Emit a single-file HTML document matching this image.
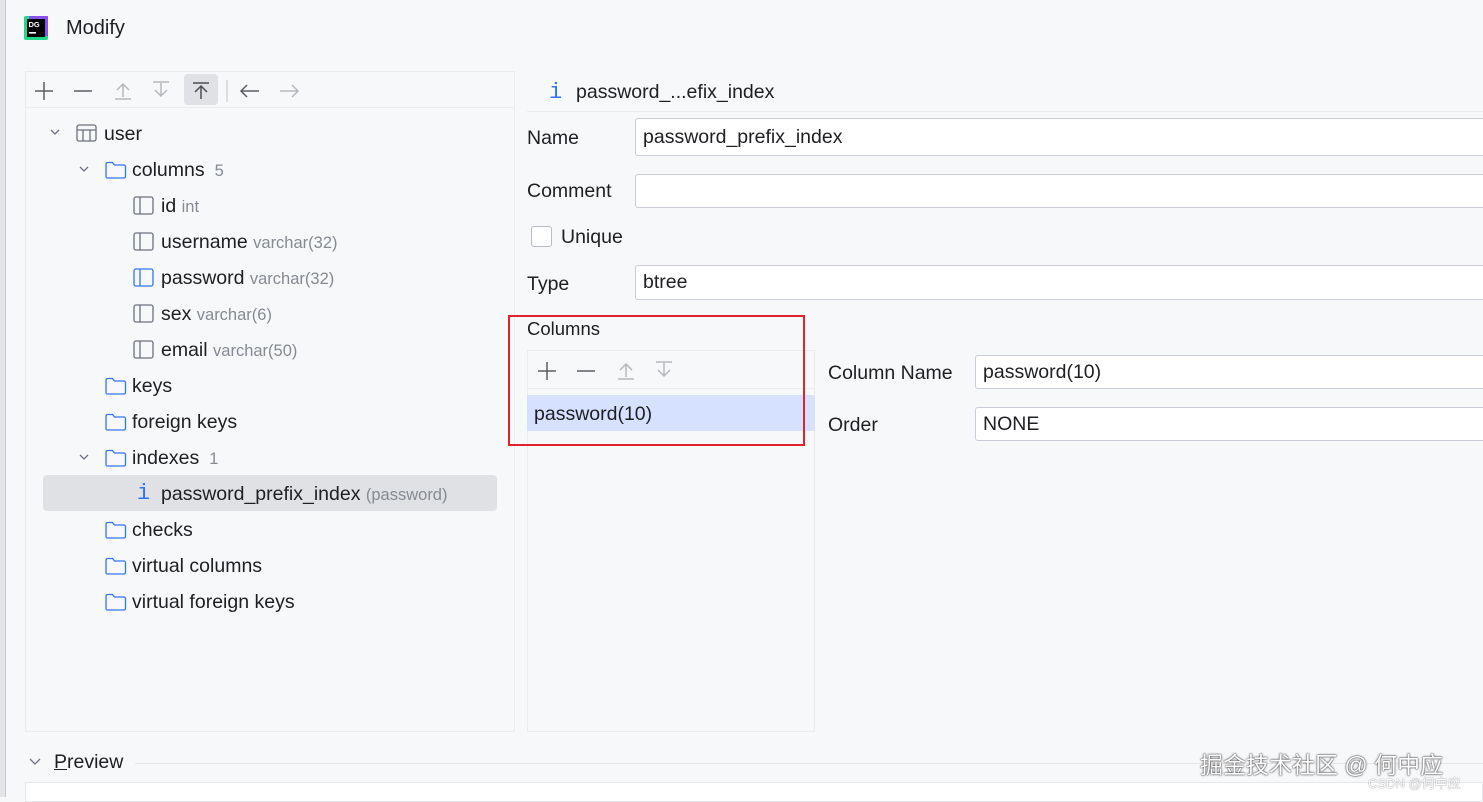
<!DOCTYPE html>
<html><head><meta charset="utf-8"><style>
*{margin:0;padding:0;box-sizing:border-box}
body{width:1483px;height:797px;background:#f7f8fa;font-family:"Liberation Sans","Noto Sans CJK SC",sans-serif;font-size:19.5px;color:#1e1f22;position:relative;overflow:hidden}
.a{position:absolute;white-space:nowrap}
.g{color:#868a91;font-size:16.5px}
.box{position:absolute;border:1px solid #ebecf0}
.inp{position:absolute;background:#fff;border:1px solid #c9ccd6;border-radius:3px;padding-left:7px;display:flex;align-items:center}
svg{position:absolute}
</style></head><body>
<div class="a" style="left:0;top:0;width:6px;height:797px;background:#e3e4e8;border-right:1px solid #c8c9cd"></div>
<svg style="left:23px;top:15px" width="26" height="26" viewBox="0 0 26 26"><rect x="1" y="1" width="24" height="24" rx="2" fill="#21d789"/><rect x="6" y="1" width="19" height="20" fill="#9939ff" opacity=".85"/><rect x="4" y="4" width="18" height="18" fill="#000"/><text x="5.5" y="12" font-size="7.5" fill="#fff" font-family="Liberation Sans" font-weight="bold">DG</text><rect x="6" y="17" width="7" height="1.6" fill="#fff"/></svg>
<div class="a" style="left:66px;top:17px;font-size:20px">Modify</div>

<div class="box" style="left:25px;top:71px;width:490px;height:661px"></div>
<div class="a" style="left:26px;top:107px;width:488px;height:1px;background:#ebecf0"></div>
<div class="a" style="left:184px;top:74px;width:34px;height:31px;border-radius:4px;background:#dfe1e5"></div>
<svg style="left:34px;top:80px" width="280" height="22" viewBox="0 0 280 22" fill="none" stroke-width="1.5">
<path d="M10 2v18M1 11h18" stroke="#5a5d63"/>
<path d="M40 11h18" stroke="#5a5d63"/>
<path d="M89 4v13M83 10l6-6 6 6M81 19h16" stroke="#b5b7bd"/>
<path d="M127 3v13M121 10l6 6 6-6M119 2h16" stroke="#b5b7bd"/>
<path d="M167 6v13M161 12l6-6 6 6M159 3h16" stroke="#4a4d52"/>
<path d="M193 -2v26" stroke="#d3d5da"/>
<path d="M207 11h18M213 5l-6 6 6 6" stroke="#5a5d63"/>
<path d="M246 11h18M258 5l6 6-6 6" stroke="#b5b7bd"/>
</svg>

<svg style="left:0;top:0" width="520" height="620" fill="none" stroke-width="1.3">
<g stroke="#6c707e"><path d="M51 130l4 4 4-4"/><path d="M80 167l4 4 4-4"/><path d="M80 455l4 4 4-4"/></g>
<g stroke="#6c707e"><rect x="77" y="125" width="19" height="16" rx="2"/><path d="M77 130h19M83 130v11M90 130v11"/></g>
<g stroke="#3574f0" fill="none">
<path d="M106 164a1.5 1.5 0 0 1 1.5-1.5h5l2 2.5h9.5a1.5 1.5 0 0 1 1.5 1.5v10a1.5 1.5 0 0 1-1.5 1.5h-16.5a1.5 1.5 0 0 1-1.5-1.5z"/>
<path d="M106 380a1.5 1.5 0 0 1 1.5-1.5h5l2 2.5h9.5a1.5 1.5 0 0 1 1.5 1.5v10a1.5 1.5 0 0 1-1.5 1.5h-16.5a1.5 1.5 0 0 1-1.5-1.5z"/>
<path d="M106 416a1.5 1.5 0 0 1 1.5-1.5h5l2 2.5h9.5a1.5 1.5 0 0 1 1.5 1.5v10a1.5 1.5 0 0 1-1.5 1.5h-16.5a1.5 1.5 0 0 1-1.5-1.5z"/>
<path d="M106 452a1.5 1.5 0 0 1 1.5-1.5h5l2 2.5h9.5a1.5 1.5 0 0 1 1.5 1.5v10a1.5 1.5 0 0 1-1.5 1.5h-16.5a1.5 1.5 0 0 1-1.5-1.5z"/>
<path d="M106 524a1.5 1.5 0 0 1 1.5-1.5h5l2 2.5h9.5a1.5 1.5 0 0 1 1.5 1.5v10a1.5 1.5 0 0 1-1.5 1.5h-16.5a1.5 1.5 0 0 1-1.5-1.5z"/>
<path d="M106 560a1.5 1.5 0 0 1 1.5-1.5h5l2 2.5h9.5a1.5 1.5 0 0 1 1.5 1.5v10a1.5 1.5 0 0 1-1.5 1.5h-16.5a1.5 1.5 0 0 1-1.5-1.5z"/>
<path d="M106 596a1.5 1.5 0 0 1 1.5-1.5h5l2 2.5h9.5a1.5 1.5 0 0 1 1.5 1.5v10a1.5 1.5 0 0 1-1.5 1.5h-16.5a1.5 1.5 0 0 1-1.5-1.5z"/>
</g>
<g stroke="#6c707e"><rect x="134" y="197" width="19" height="17" rx="2"/><path d="M140 197v17"/>
<rect x="134" y="233" width="19" height="17" rx="2"/><path d="M140 233v17"/>
<rect x="134" y="305" width="19" height="17" rx="2"/><path d="M140 305v17"/>
<rect x="134" y="341" width="19" height="17" rx="2"/><path d="M140 341v17"/></g>
<g stroke="#3574f0"><rect x="134" y="269" width="19" height="17" rx="2"/><path d="M140 269v17"/></g>
</svg>
<div class="a" style="left:43px;top:475px;width:454px;height:36px;background:#dfe1e5;border-radius:4px"></div>
<div class="a" style="left:104px;top:123px">user</div>
<div class="a" style="left:132px;top:159px">columns <span class="g">&nbsp;5</span></div>
<div class="a" style="left:161px;top:195px">id <span class="g">int</span></div>
<div class="a" style="left:161px;top:231px">username <span class="g">varchar(32)</span></div>
<div class="a" style="left:161px;top:267px">password <span class="g">varchar(32)</span></div>
<div class="a" style="left:161px;top:303px">sex <span class="g">varchar(6)</span></div>
<div class="a" style="left:161px;top:339px">email <span class="g">varchar(50)</span></div>
<div class="a" style="left:132px;top:375px">keys</div>
<div class="a" style="left:132px;top:411px">foreign keys</div>
<div class="a" style="left:132px;top:447px">indexes <span class="g">&nbsp;1</span></div>
<div class="a" style="left:137px;top:481px;color:#3574f0;font-size:22px;font-family:'Liberation Mono',monospace">i</div>
<div class="a" style="left:161px;top:483px">password_prefix_index <span class="g">(password)</span></div>
<div class="a" style="left:132px;top:519px">checks</div>
<div class="a" style="left:132px;top:555px">virtual columns</div>
<div class="a" style="left:132px;top:591px">virtual foreign keys</div>

<div class="a" style="left:549px;top:80px;color:#3574f0;font-size:22px;font-family:'Liberation Mono',monospace">i</div>
<div class="a" style="left:576px;top:81px">password_...efix_index</div>
<div class="a" style="left:527px;top:111px;width:956px;height:1px;background:#ebecf0"></div>
<div class="a" style="left:527px;top:127px">Name</div>
<div class="inp" style="left:635px;top:118px;width:860px;height:38px">password_prefix_index</div>
<div class="a" style="left:527px;top:180px">Comment</div>
<div class="inp" style="left:635px;top:174px;width:860px;height:34px"></div>
<div class="a" style="left:531px;top:226px;width:21px;height:21px;border:1px solid #b9bcc4;border-radius:3px;background:#fff"></div>
<div class="a" style="left:561px;top:226px">Unique</div>
<div class="a" style="left:527px;top:273px">Type</div>
<div class="inp" style="left:635px;top:265px;width:860px;height:35px">btree</div>
<div class="a" style="left:527px;top:318px;font-size:18.5px">Columns</div>

<div class="box" style="left:527px;top:350px;width:288px;height:382px"></div>
<div class="a" style="left:528px;top:388px;width:286px;height:1px;background:#ebecf0"></div>
<svg style="left:537px;top:360px" width="150" height="22" viewBox="0 0 150 22" fill="none" stroke-width="1.5">
<path d="M10 2v18M1 11h18" stroke="#5a5d63"/>
<path d="M40 11h18" stroke="#5a5d63"/>
<path d="M89 4v13M83 10l6-6 6 6M81 19h16" stroke="#b5b7bd"/>
<path d="M127 3v13M121 10l6 6 6-6M119 2h16" stroke="#b5b7bd"/>
</svg>
<div class="a" style="left:527px;top:395px;width:288px;height:36px;background:#d5e1ff"></div>
<div class="a" style="left:534px;top:403px">password(10)</div>
<div class="a" style="left:508px;top:315px;width:297px;height:131px;border:2px solid #e0222f"></div>

<div class="a" style="left:828px;top:362px">Column Name</div>
<div class="inp" style="left:975px;top:355px;width:520px;height:34px">password(10)</div>
<div class="a" style="left:828px;top:414px">Order</div>
<div class="inp" style="left:975px;top:407px;width:520px;height:34px">NONE</div>

<svg style="left:28px;top:757px" width="14" height="10" fill="none" stroke="#6c707e" stroke-width="1.3"><path d="M2 2l5 5 5-5"/></svg>
<div class="a" style="left:54px;top:751px"><u>P</u>review</div>
<div class="a" style="left:135px;top:763px;width:1348px;height:1px;background:#e6e7ea"></div>
<div class="a" style="left:25px;top:782px;width:1458px;height:20px;background:#fff;border:1px solid #e6e7ea"></div>
<div class="a" style="left:1200px;top:746px;font-size:23px;color:#fff;text-shadow:0 0 2px #333,0 0 1px #333">掘金技术社区 @ 何中应</div>
<div class="a" style="left:1368px;top:773px;font-size:13px;color:#fff;text-shadow:0 0 1px #555">CSDN @何中应</div>
</body></html>
